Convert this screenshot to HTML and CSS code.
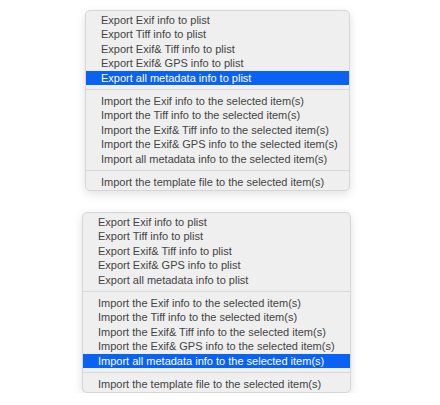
FILE: index.html
```html
<!DOCTYPE html>
<html lang="en">
<head>
  <meta charset="UTF-8" />
  <title>Metadata menu</title>
  <link rel="stylesheet" href="styles.css">
</head>
<body>
  <div class="menu menu-top">
    <div class="item">Export Exif info to plist</div>
    <div class="item">Export Tiff info to plist</div>
    <div class="item">Export Exif&amp; Tiff info to plist</div>
    <div class="item">Export Exif&amp; GPS info to plist</div>
    <div class="item active">Export all metadata info to plist</div>
    <div class="sep"></div>
    <div class="item">Import the Exif info to the selected item(s)</div>
    <div class="item">Import the Tiff info to the selected item(s)</div>
    <div class="item">Import the Exif&amp; Tiff info to the selected item(s)</div>
    <div class="item">Import the Exif&amp; GPS info to the selected item(s)</div>
    <div class="item">Import all metadata info to the selected item(s)</div>
    <div class="sep"></div>
    <div class="item">Import the template file to the selected item(s)</div>
  </div>

  <div class="menu menu-bottom">
    <div class="item">Export Exif info to plist</div>
    <div class="item">Export Tiff info to plist</div>
    <div class="item">Export Exif&amp; Tiff info to plist</div>
    <div class="item">Export Exif&amp; GPS info to plist</div>
    <div class="item">Export all metadata info to plist</div>
    <div class="sep"></div>
    <div class="item">Import the Exif info to the selected item(s)</div>
    <div class="item">Import the Tiff info to the selected item(s)</div>
    <div class="item">Import the Exif&amp; Tiff info to the selected item(s)</div>
    <div class="item">Import the Exif&amp; GPS info to the selected item(s)</div>
    <div class="item active">Import all metadata info to the selected item(s)</div>
    <div class="sep"></div>
    <div class="item">Import the template file to the selected item(s)</div>
  </div>
</body>
</html>
```

FILE: styles.css
```css
body {
  margin: 0;
  padding-top: 10px;
  background: #fff;
  font-family: "Liberation Sans", Arial, sans-serif;
  display: flex;
  flex-direction: column;
  gap: 21px;
}
.menu {
  background: #efefef;
  border: 1px solid #d6d6d6;
  border-radius: 5px;
  padding: 2px 0;
  box-shadow: 0 3px 10px rgba(0, 0, 0, 0.12);
  box-sizing: border-box;
}
.menu-top {
  margin-left: 85px;
  width: 265px;
  height: 181px;
}
.menu-bottom {
  margin-left: 82px;
  width: 269px;
  height: 181px;
}
.item {
  font-size: 11px;
  line-height: 14.4px;
  padding-left: 15px;
  color: #444;
  white-space: nowrap;
}
.item.active {
  background: #0a62f5;
  color: #fff;
}
.sep {
  height: 1px;
  background: #d8d8d8;
  margin: 4px 0;
}
```
